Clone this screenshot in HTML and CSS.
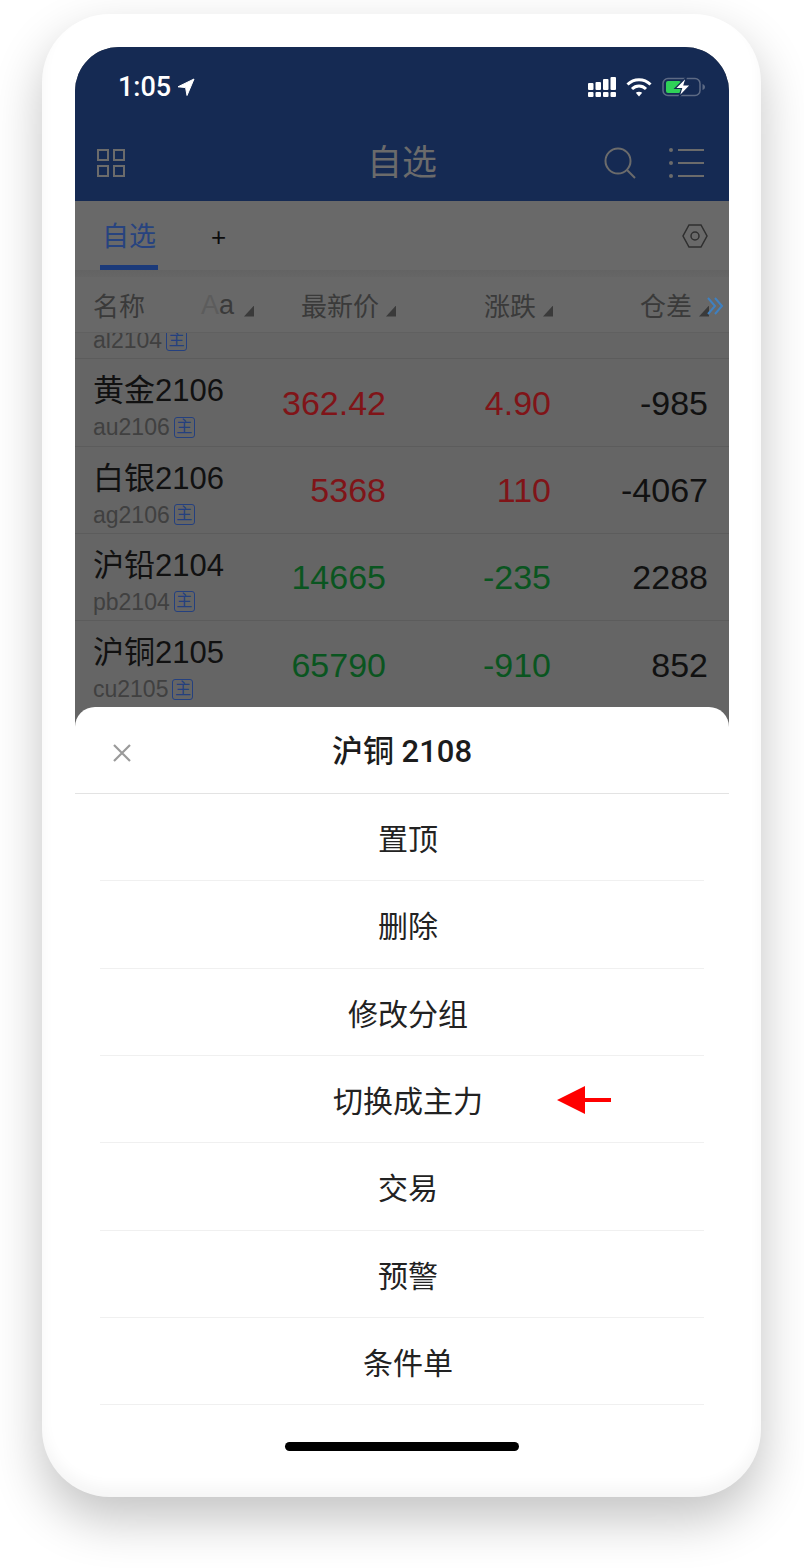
FILE: index.html
```html
<!DOCTYPE html>
<html lang="en">
<head>
<meta charset="UTF-8">
<title>自选</title>
<link rel="stylesheet" href="styles.css">
</head>
<body>
<div class="phone">
  <div class="screen">
    <div class="topbar">
      <div class="status">
        <div class="clock">
          <span>1:05</span>
          <svg width="18" height="19" viewBox="0 0 18 19"><path d="M17 1 1 8.800l7.600.8L10 17.500z" fill="#fff" stroke="#fff" stroke-width="1" stroke-linejoin="round"/></svg>
        </div>
        <div class="status-icons">
          <svg width="28" height="20" viewBox="0 0 28 20" fill="#fff">
            <rect x="0" y="6" width="5.500" height="7" rx="1"/><rect x="0" y="15" width="5.500" height="5" rx="1"/>
            <rect x="7.500" y="5" width="5.500" height="8" rx="1"/><rect x="7.500" y="15" width="5.500" height="5" rx="1"/>
            <rect x="15" y="2" width="5.500" height="11" rx="1"/><rect x="15" y="15" width="5.500" height="5" rx="1"/>
            <rect x="22.500" y="0" width="5.500" height="13" rx="1"/><rect x="22.500" y="15" width="5.500" height="5" rx="1"/>
          </svg>
          <svg width="26" height="20" viewBox="0 0 26 20" fill="none" stroke="#fff" stroke-width="3">
            <path d="M1.500 7.500C8 1 18 1 24.500 7.500"/>
            <path d="M6 12c4-4 10-4 14 0"/>
            <path d="M13 19.500 9.800 15.800c1.800-1.500 4.600-1.500 6.400 0z" fill="#fff" stroke="none"/>
          </svg>
          <svg width="43" height="20" viewBox="0 0 43 20">
            <rect x="1" y="1.500" width="37" height="17" rx="5" fill="none" stroke="#5d6a84" stroke-width="1.500"/>
            <path d="M40.500 7v6c1.500-.5 2.500-1.500 2.500-3s-1-2.500-2.500-3z" fill="#5d6a84"/>
            <rect x="4" y="4" width="15" height="12" rx="2" fill="#2fd158"/>
            <path d="M24.500 0 13 11.500h6.500L17 20l11.500-12H22z" fill="#fff" stroke="#152a53" stroke-width="1.200"/>
          </svg>
        </div>
      </div>
      <div class="nav">
        <svg width="30" height="30" viewBox="0 0 30 30" fill="none" stroke="#6b6b6b" stroke-width="2">
          <rect x="2" y="2" width="10" height="10"/><rect x="18" y="2" width="10" height="10"/>
          <rect x="2" y="18" width="10" height="10"/><rect x="18" y="18" width="10" height="10"/>
        </svg>
        <div class="nav-title">自选</div>
        <div class="nav-right">
          <svg width="32" height="32" viewBox="0 0 32 32" fill="none" stroke="#6b6b6b" stroke-width="2">
            <circle cx="14" cy="14" r="12.500"/><path d="m23 23 8 8"/>
          </svg>
          <svg width="36" height="30" viewBox="0 0 36 30" fill="none" stroke="#6b6b6b" stroke-width="2">
            <path d="M9 2h26M9 15h26M9 28h26"/>
            <g fill="#6b6b6b" stroke="none"><circle cx="2" cy="2" r="2"/><circle cx="2" cy="15" r="2"/><circle cx="2" cy="28" r="2"/></g>
          </svg>
        </div>
      </div>
    </div>

    <div class="tabs">
      <div class="tab">自选</div>
      <div class="tab-add">+</div>
      <svg class="tab-gear" width="26" height="24" viewBox="0 0 26 24" fill="none" stroke="#2f2f2f" stroke-width="1.500">
        <path d="M7 1h12l6 11-6 11H7L1 12z"/><circle cx="13" cy="12" r="4"/>
      </svg>
    </div>
    <div class="tabs-shade"></div>

    <div class="col-head">
      <div>名称</div>
      <div class="col-cell"><span class="col-aa"><i>A</i>a</span><b class="sort"></b></div>
      <div class="col-cell">最新价<b class="sort"></b></div>
      <div class="col-cell">涨跌<b class="sort"></b></div>
      <div class="col-cell">仓差<b class="sort"></b></div>
      <svg class="col-more" width="17" height="18" viewBox="0 0 17 18" fill="none" stroke="#3f80c0" stroke-width="2">
        <path d="m1 1 7 8-7 8M8 1l7 8-7 8"/>
      </svg>
    </div>

    <div class="quotes">
      <div class="row row-cut">
        <div class="name">
          <div class="name-cn">沪铝2104</div>
          <div class="name-code">al2104<span class="tag">主</span></div>
        </div>
      </div>
      <div class="row">
        <div class="name">
          <div class="name-cn">黄金2106</div>
          <div class="name-code">au2106<span class="tag">主</span></div>
        </div>
        <div class="val up">362.42</div>
        <div class="val up">4.90</div>
        <div class="val">-985</div>
      </div>
      <div class="row">
        <div class="name">
          <div class="name-cn">白银2106</div>
          <div class="name-code">ag2106<span class="tag">主</span></div>
        </div>
        <div class="val up">5368</div>
        <div class="val up">110</div>
        <div class="val">-4067</div>
      </div>
      <div class="row">
        <div class="name">
          <div class="name-cn">沪铅2104</div>
          <div class="name-code">pb2104<span class="tag">主</span></div>
        </div>
        <div class="val down">14665</div>
        <div class="val down">-235</div>
        <div class="val">2288</div>
      </div>
      <div class="row">
        <div class="name">
          <div class="name-cn">沪铜2105</div>
          <div class="name-code">cu2105<span class="tag">主</span></div>
        </div>
        <div class="val down">65790</div>
        <div class="val down">-910</div>
        <div class="val">852</div>
      </div>
    </div>

    <div class="sheet">
      <div class="sheet-head">
        <svg class="sheet-close" width="18" height="18" viewBox="0 0 18 18" stroke="#9a9a9a" stroke-width="2.200">
          <path d="m1 1 16 16M17 1 1 17"/>
        </svg>
        <div class="sheet-title">沪铜 2108</div>
      </div>
      <div class="sheet-list">
        <div class="sheet-item">置顶</div>
        <div class="sheet-item">删除</div>
        <div class="sheet-item">修改分组</div>
        <div class="sheet-item">切换成主力
          <svg class="arrow" width="54" height="28" viewBox="0 0 54 28" fill="#f00"><path d="M0 14 28 0v12h26v4H28v12z"/></svg>
        </div>
        <div class="sheet-item">交易</div>
        <div class="sheet-item">预警</div>
        <div class="sheet-item">条件单</div>
      </div>
      <div class="home-bar"></div>
    </div>
  </div>
</div>
</body>
</html>
```

FILE: styles.css
```css
html, body {
  margin: 0;
  background-color: #fff;
}
body {
  width: 804px;
  height: 1568px;
  overflow: hidden;
  font-family: "Liberation Sans", "Noto Sans CJK SC", sans-serif;
  color: #111;
}

.phone {
  width: 719px;
  height: 1483px;
  margin: 14px 0 0 42px;
  padding: 33px 32px 33px 33px;
  box-sizing: border-box;
  background-color: #fff;
  border-radius: 68px;
  box-shadow: 0 22px 50px rgba(0, 0, 0, .24), inset 0 -10px 14px rgba(0, 0, 0, .04);
}
.screen {
  position: relative;
  height: 1420px;
  border-radius: 44px 44px 0 0;
  overflow: hidden;
  background-color: #656565;
}

/* top bar */
.topbar {
  height: 154px;
  background-color: #152a53;
}
.status {
  height: 73px;
  display: flex;
  justify-content: space-between;
  align-items: flex-start;
  padding: 25px 24px 0 43px;
  box-sizing: border-box;
}
.clock {
  display: flex;
  align-items: center;
  gap: 6px;
  font-family: Roboto, sans-serif;
  font-weight: 500;
  font-size: 27px;
  line-height: 30px;
  color: #fff;
}
.status-icons {
  display: flex;
  align-items: center;
  gap: 10px;
  margin-top: 5px;
}
.nav {
  height: 81px;
  display: flex;
  align-items: center;
  justify-content: space-between;
  padding: 4px 24px 0 21px;
  box-sizing: border-box;
  position: relative;
}
.nav-title {
  position: absolute;
  left: 0;
  right: 0;
  top: 21px;
  text-align: center;
  font-size: 35px;
  line-height: 44px;
  color: #6b6b6b;
}
.nav-right {
  display: flex;
  align-items: center;
  gap: 33px;
}

/* tabs */
.tabs {
  height: 69px;
  display: flex;
  align-items: flex-start;
  padding-left: 25px;
  box-sizing: border-box;
  background-color: #696969;
  position: relative;
}
.tab {
  width: 58px;
  height: 69px;
  box-sizing: border-box;
  border-bottom: 5px solid #1b3a7a;
  text-align: center;
  font-size: 27px;
  line-height: 72px;
  color: #27437f;
}
.tab-add {
  margin-left: 53px;
  font-size: 26px;
  line-height: 72px;
  color: #0c0c0c;
}
.tab-gear {
  position: absolute;
  right: 21px;
  top: 23px;
}
.tabs-shade {
  height: 7px;
  background: linear-gradient(#636363, #666);
}

/* quote table */
.col-head {
  position: relative;
  height: 56px;
  display: grid;
  grid-template-columns: 107px 54px 142px 157px 156px;
  align-items: center;
  padding-left: 18px;
  background-color: #686868;
  border-bottom: 1px solid #606060;
  box-sizing: border-box;
  font-size: 26px;
  color: #3a3a3a;
}
.col-cell {
  display: flex;
  justify-content: flex-end;
  align-items: center;
  gap: 7px;
}
.col-aa {
  font-size: 27px;
  margin-right: 3px;
  padding-top: 2px;
}
.col-aa i {
  font-style: normal;
  color: #5c5c5c;
}
.sort {
  width: 10px;
  height: 11px;
  margin-top: 13px;
  background-color: #3a3a3a;
  clip-path: polygon(100% 0, 100% 100%, 0 100%);
}
.col-more {
  position: absolute;
  left: 632px;
  top: 20px;
}

.quotes {
  height: 374px;
  overflow: hidden;
}
.row {
  height: 87.25px;
  box-sizing: border-box;
  display: grid;
  grid-template-columns: 128px 165px 165px 157px;
  align-items: center;
  padding-left: 18px;
  border-bottom: 1px solid #5c5c5c;
}
.row-cut {
  margin-top: -61px;
}
.name {
  align-self: start;
  padding-top: 14px;
  white-space: nowrap;
}
.name-cn {
  font-size: 31px;
  line-height: 36px;
  color: #111;
}
.name-code {
  display: flex;
  align-items: center;
  font-size: 23px;
  line-height: 26px;
  margin-top: 5px;
  color: #404040;
}
.tag {
  width: 21px;
  height: 21px;
  margin-left: 4px;
  box-sizing: border-box;
  border: 1.5px solid #24407f;
  border-radius: 3px;
  text-align: center;
  font-size: 16px;
  line-height: 18px;
  color: #24407f;
}
.val {
  padding-top: 2px;
  text-align: right;
  font-size: 34px;
  color: #111;
}
.val.up {
  color: #801418;
}
.val.down {
  color: #0a5520;
}

/* action sheet */
.sheet {
  position: absolute;
  left: 0;
  right: 0;
  bottom: 0;
  height: 760px;
  background-color: #fff;
  border-radius: 20px 20px 0 0;
}
.sheet-head {
  position: relative;
  height: 87px;
  box-sizing: border-box;
  border-bottom: 1px solid #e3e3e3;
}
.sheet-close {
  position: absolute;
  left: 38px;
  top: 37px;
}
.sheet-title {
  text-align: center;
  font-family: Roboto, "Noto Sans CJK SC", sans-serif;
  font-size: 31px;
  font-weight: 500;
  line-height: 90px;
  color: #1c1c1c;
}
.sheet-list {
  padding: 0 25px;
}
.sheet-item {
  position: relative;
  height: 87.33px;
  box-sizing: border-box;
  border-bottom: 1px solid #f0f0f0;
  padding-left: 12px;
  text-align: center;
  font-size: 30px;
  line-height: 91px;
  color: #222;
}
.arrow {
  position: absolute;
  left: 457px;
  top: 30px;
}
.home-bar {
  width: 234px;
  height: 9px;
  margin: 37px auto 0;
  border-radius: 5px;
  background-color: #000;
}
```
